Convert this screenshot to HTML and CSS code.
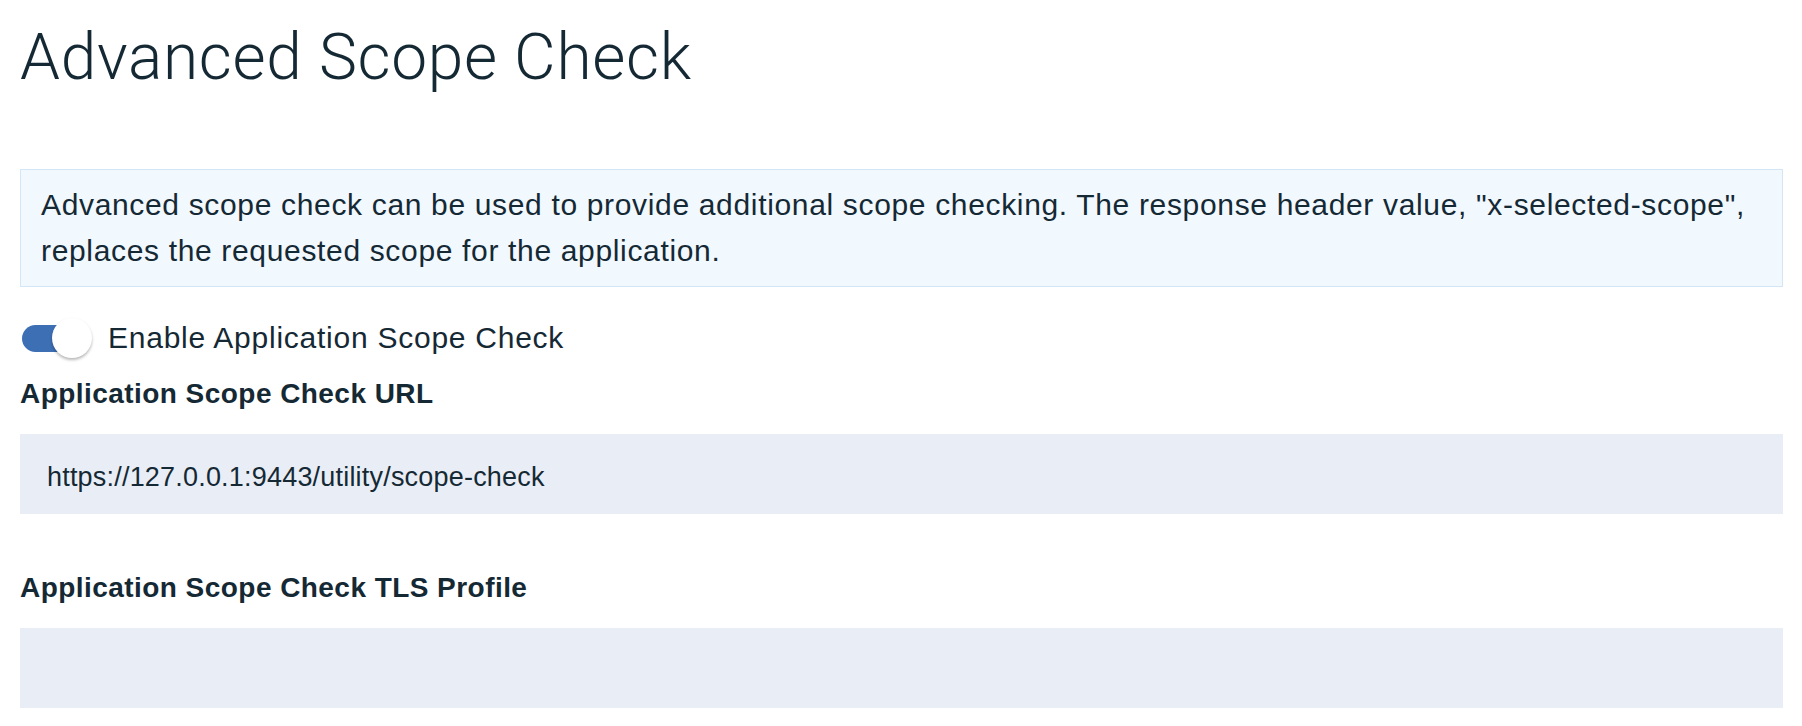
FILE: index.html
```html
<!DOCTYPE html>
<html lang="en">
<head>
<meta charset="utf-8">
<title>Advanced Scope Check</title>
<link rel="stylesheet" href="styles.css">
</head>
<body>
<main class="page">
  <h1 class="title">Advanced Scope Check</h1>
  <div class="notice">Advanced scope check can be used to provide additional scope checking. The response header value, "x-selected-scope", replaces the requested scope for the application.</div>
  <label class="toggle-row">
    <span class="toggle"><span class="toggle-knob"></span></span>
    <span class="toggle-text">Enable Application Scope Check</span>
  </label>
  <div class="field">
    <div class="field-label">Application Scope Check URL</div>
    <input class="field-input" type="text" value="https://127.0.0.1:9443/utility/scope-check">
  </div>
  <div class="field">
    <div class="field-label">Application Scope Check TLS Profile</div>
    <input class="field-input" type="text" value="">
  </div>
</main>
</body>
</html>
```
FILE: styles.css
```css
* { box-sizing: border-box; }
html, body { margin: 0; padding: 0; background: #ffffff; }
body {
  font-family: "Liberation Sans", Arial, sans-serif;
  color: #152935;
}
.page {
  padding: 20px 19px 0 20px;
  display: flex;
  flex-direction: column;
}
.title {
  margin: 0;
  font-family: Roboto, "Liberation Sans", sans-serif;
  font-weight: 300;
  font-size: 64px;
  line-height: 76px;
  letter-spacing: 0.7px;
  color: #152935;
}
.notice {
  margin-top: 73px;
  background: #f1f8fe;
  border: 1px solid #d2e6f8;
  padding: 12px 20px;
  font-size: 30px;
  line-height: 46px;
  letter-spacing: 0.66px;
}
.toggle-row {
  margin-top: 31px;
  display: flex;
  align-items: center;
  gap: 16px;
  height: 40px;
}
.toggle {
  position: relative;
  width: 72px;
  height: 40px;
  flex: none;
}
.toggle::before {
  content: "";
  position: absolute;
  left: 2px;
  top: 7px;
  width: 64px;
  height: 27px;
  border-radius: 14px;
  background: #3d6fb5;
}
.toggle-knob {
  position: absolute;
  left: 32px;
  top: 0;
  width: 40px;
  height: 40px;
  border-radius: 50%;
  background: #ffffff;
  box-shadow: 0 2px 3px rgba(0, 0, 0, 0.28);
}
.toggle-text {
  font-size: 30px;
  line-height: 40px;
  letter-spacing: 0.75px;
}
.field {
  margin-top: 20px;
  display: flex;
  flex-direction: column;
}
.field + .field { margin-top: 58px; }
.field-label {
  font-size: 28px;
  font-weight: 700;
  line-height: 32px;
  letter-spacing: 0.45px;
  margin-bottom: 24px;
}
.field-input {
  display: block;
  width: 100%;
  height: 80px;
  margin: 0;
  border: 0;
  outline: none;
  background: #e9eef6;
  padding: 6px 27px 0 27px;
  font-family: "Liberation Sans", Arial, sans-serif;
  font-size: 27px;
  letter-spacing: 0.2px;
  color: #152935;
}
```
